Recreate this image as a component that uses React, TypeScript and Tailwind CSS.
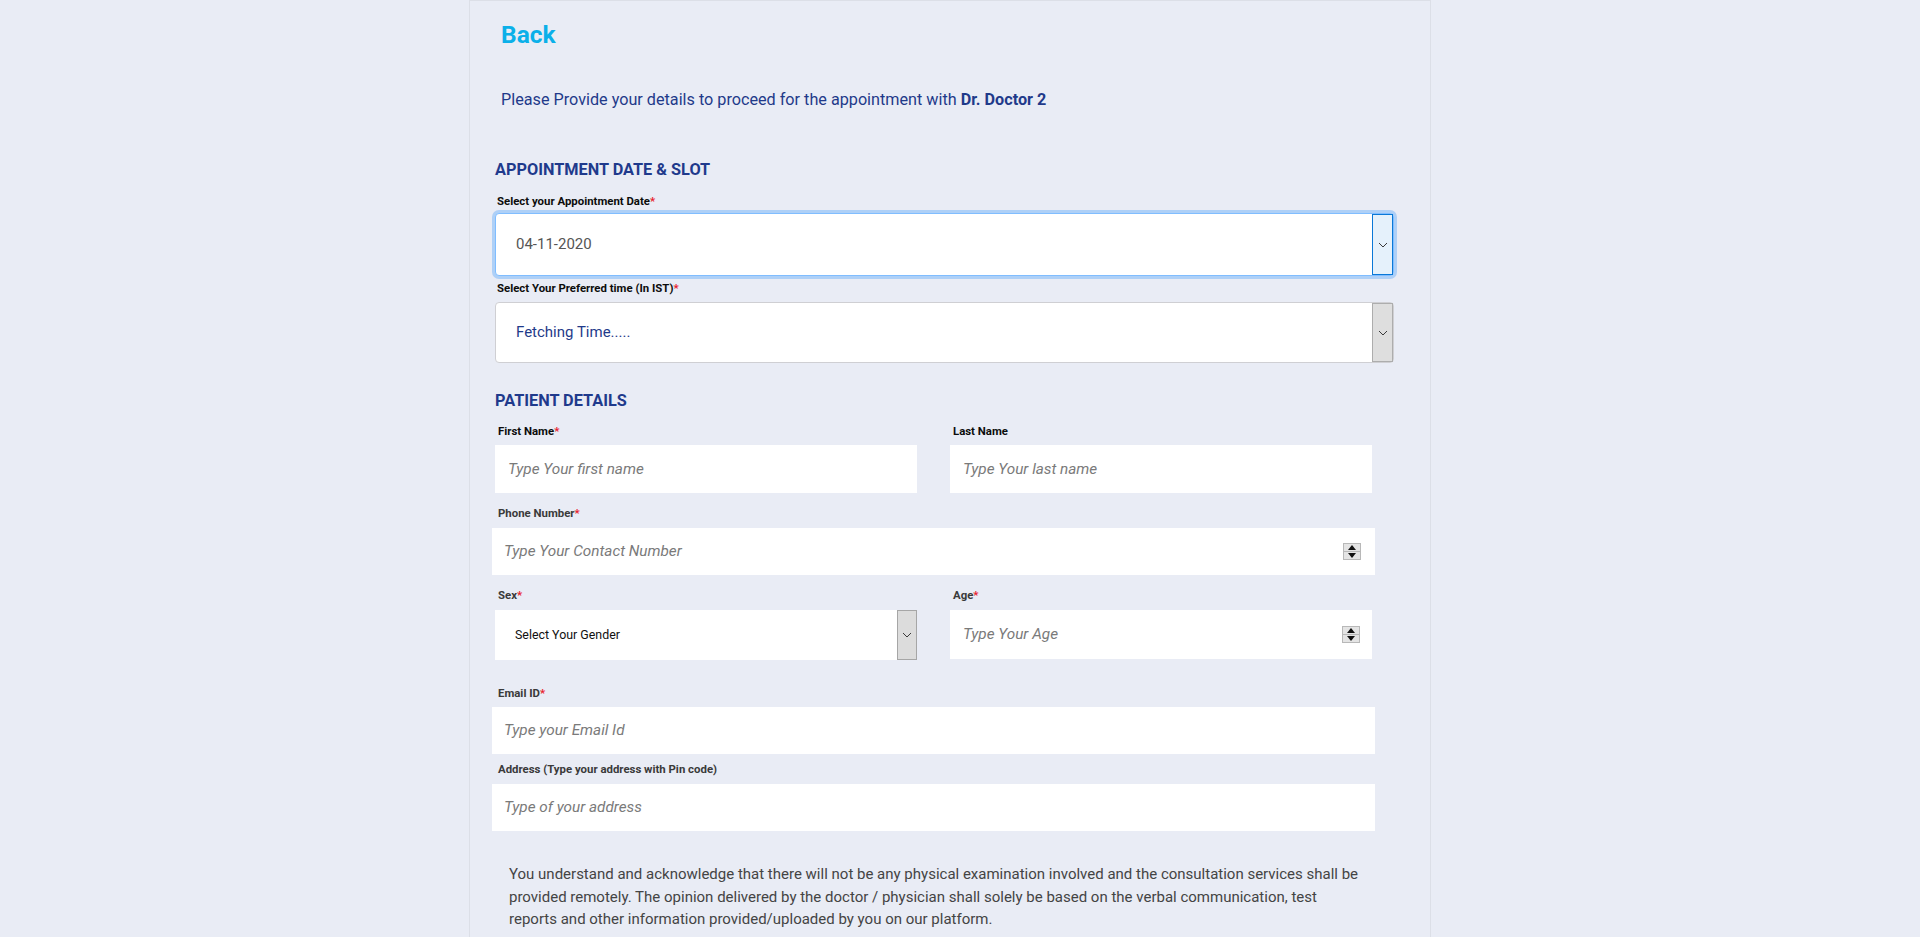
import React from "react";

function Req() {
  return <span className="text-[#e8202a]">*</span>;
}

function Label({ text, req, muted, className = "" }: { text: string; req?: boolean; muted?: boolean; className?: string }) {
  return (
    <div className={`text-[11.4px] leading-[14px] font-bold ${muted ? "text-[#3a3a3a]" : "text-[#0c0c0c]"} ${className}`}>
      {text}
      {req ? <Req /> : null}
    </div>
  );
}

function Chevron() {
  return (
    <svg width="10" height="6" viewBox="0 0 10 6" fill="none">
      <path d="M1 1 L5 5 L9 1" stroke="#3a3a3a" strokeWidth="1" />
    </svg>
  );
}

function Spinner() {
  return (
    <div className="flex h-[17px] w-[18px] flex-col border border-[#b8b8b8] bg-[#e4e4e4]">
      <div className="flex flex-1 items-center justify-center border-b border-[#b8b8b8]">
        <svg width="8" height="5" viewBox="0 0 8 5">
          <path d="M0 5 L4 0 L8 5 Z" fill="#111" />
        </svg>
      </div>
      <div className="flex flex-1 items-center justify-center">
        <svg width="8" height="5" viewBox="0 0 8 5">
          <path d="M0 0 L4 5 L8 0 Z" fill="#111" />
        </svg>
      </div>
    </div>
  );
}

function Placeholder({ text }: { text: string }) {
  return <span className="text-[15.3px] italic text-[#7a7a7a]">{text}</span>;
}

export default function App() {
  return (
    <div className="min-h-screen bg-[#e9ecf5] font-['Roboto',sans-serif]">
      <div className="ml-[469px] min-h-[937px] w-[962px] border-x border-t border-[#dcdfe7] bg-[#e9ecf5]">
        <div className="pl-[31px] pt-[20px] text-[24.5px] leading-[28px] font-bold text-[#0bb0e9]">Back</div>
        <p className="mt-[39px] pl-[31px] text-[16.2px] leading-[24px] text-[#1f3a8a]">
          Please Provide your details to proceed for the appointment with <b>Dr. Doctor 2</b>
        </p>

        <h2 className="mt-[48px] pl-[25px] text-[16.3px] leading-[20px] font-bold text-[#1f3a8c]">APPOINTMENT DATE &amp; SLOT</h2>

        <Label text="Select your Appointment Date" req className="mt-[14px] pl-[27px]" />
        <div className="ml-[25px] mt-[5px] flex h-[63px] w-[899px] rounded-[4px] border border-[#80bdff] bg-white shadow-[0_0_0_3px_rgba(0,123,255,0.25)]">
          <div className="flex flex-1 items-center pl-[20px] text-[15px] text-[#555]">04-11-2020</div>
          <div className="flex w-[21px] items-center justify-center border border-[#0a78d7] bg-[#e5f1fb]">
            <Chevron />
          </div>
        </div>

        <Label text="Select Your Preferred time (In IST)" req className="mt-[5px] pl-[27px]" />
        <div className="ml-[25px] mt-[7px] flex h-[61px] w-[899px] rounded-[4px] border border-[#cfcfd3] bg-white">
          <div className="flex flex-1 items-center pl-[20px] text-[15px] text-[#1f3a8a]">Fetching Time.....</div>
          <div className="flex w-[21px] items-center justify-center border border-[#adadad] bg-[#dedede]">
            <Chevron />
          </div>
        </div>

        <h2 className="mt-[28px] pl-[25px] text-[16.3px] leading-[20px] font-bold text-[#1f3a8c]">PATIENT DETAILS</h2>

        <div className="ml-[25px] mt-[13px] grid w-[877px] grid-cols-[422px_422px] gap-x-[33px]">
          <div>
            <Label text="First Name" req className="pl-[3px]" />
            <div className="mt-[7px] flex h-[48px] items-center bg-white pl-[13px]">
              <Placeholder text="Type Your first name" />
            </div>
          </div>
          <div>
            <Label text="Last Name" className="pl-[3px]" />
            <div className="mt-[7px] flex h-[48px] items-center bg-white pl-[13px]">
              <Placeholder text="Type Your last name" />
            </div>
          </div>
        </div>

        <Label text="Phone Number" req muted className="mt-[13px] pl-[28px]" />
        <div className="ml-[22px] mt-[8px] flex h-[47px] w-[883px] items-center justify-between bg-white pl-[12px] pr-[14px]">
          <Placeholder text="Type Your Contact Number" />
          <Spinner />
        </div>

        <div className="ml-[25px] mt-[13px] grid w-[877px] grid-cols-[422px_422px] gap-x-[33px]">
          <div>
            <Label text="Sex" req muted className="pl-[3px]" />
            <div className="mt-[8px] flex h-[50px] bg-white">
              <div className="flex flex-1 items-center pl-[20px] text-[12.4px] text-[#111]">Select Your Gender</div>
              <div className="flex w-[20px] items-center justify-center border border-[#a6a6a6] bg-[#dcdcdc]">
                <Chevron />
              </div>
            </div>
          </div>
          <div>
            <Label text="Age" req muted className="pl-[3px]" />
            <div className="mt-[8px] flex h-[49px] items-center justify-between bg-white pl-[13px] pr-[12px]">
              <Placeholder text="Type Your Age" />
              <Spinner />
            </div>
          </div>
        </div>

        <Label text="Email ID" req muted className="mt-[26px] pl-[28px]" />
        <div className="ml-[22px] mt-[7px] flex h-[47px] w-[883px] items-center bg-white pl-[12px]">
          <Placeholder text="Type your Email Id" />
        </div>

        <Label text="Address (Type your address with Pin code)" muted className="mt-[8px] pl-[28px]" />
        <div className="ml-[22px] mt-[8px] flex h-[47px] w-[883px] items-center bg-white pl-[12px]">
          <Placeholder text="Type of your address" />
        </div>

        <p className="mt-[32px] pl-[39px] text-[15px] leading-[22.5px] text-[#444]">
          You understand and acknowledge that there will not be any physical examination involved and the consultation services shall be
          <br />
          provided remotely. The opinion delivered by the doctor / physician shall solely be based on the verbal communication, test
          <br />
          reports and other information provided/uploaded by you on our platform.
        </p>
      </div>
    </div>
  );
}
